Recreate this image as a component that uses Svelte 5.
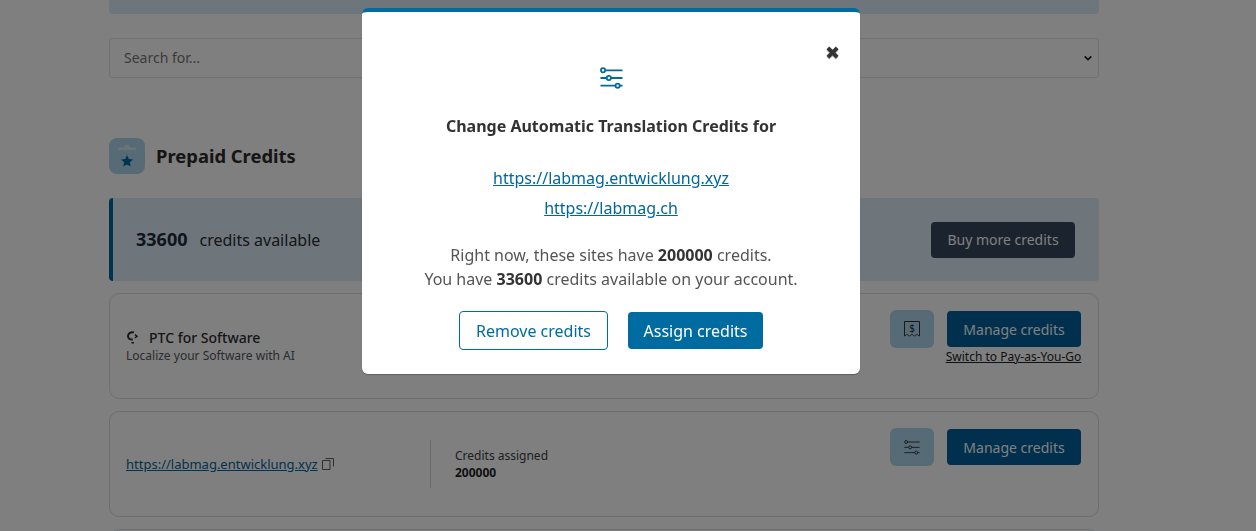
<script lang="ts">
  const sites = ['https://labmag.entwicklung.xyz', 'https://labmag.ch'];
  const siteCredits = 200000;
  const available = 33600;
</script>

{#snippet sliders(cls)}
  <svg class={cls} viewBox="0 0 24 24" fill="none" stroke="currentColor" aria-hidden="true">
    <path d="M5.4 4.5H23.5M.5 12.5h6.4M11.5 12.5h12M.5 20.5h15.6M20.6 20.5h2.9" />
    <circle cx="3.2" cy="4.5" r="2.2" />
    <circle cx="9.2" cy="12.5" r="2.2" />
    <circle cx="18.4" cy="20.5" r="2.2" />
  </svg>
{/snippet}

<div class="page">
  <div class="top-band"></div>

  <div class="filters">
    <input class="search" type="text" placeholder="Search for..." />
    <div class="select">
      <svg viewBox="0 0 12 12" fill="none" stroke="currentColor" stroke-width="2" aria-hidden="true"><path d="M2 4l4 4 4-4" /></svg>
    </div>
  </div>

  <div class="section-title">
    <span class="section-icon">
      <svg viewBox="0 0 36 36" aria-hidden="true">
        <path class="clip" d="M10 9.5h5c.4-2 1.4-3 3-3s2.600 1 3 3h5a1.200 1.200 0 0 1 0 2.500H10a1.200 1.200 0 0 1 0-2.500z" />
        <path class="star" d="M18 17l1.800 3.900 4.200.5-3.100 2.900.8 4.200-3.700-2.100-3.700 2.100.8-4.200-3.100-2.900 4.200-.5z" />
      </svg>
    </span>
    <h2>Prepaid Credits</h2>
  </div>

  <div class="balance">
    <div class="balance-text"><strong>{available}</strong><span>credits available</span></div>
    <button class="btn-dark" type="button">Buy more credits</button>
  </div>

  <div class="card">
    <div class="product">
      <div class="product-name">
        <svg viewBox="0 0 13 13" fill="none" stroke="currentColor" aria-hidden="true">
          <path stroke-width="1.9" d="M8 1.400C4.400.6 1.800 2.800 2 5.400c.2 2.200 2.400 3.600 4.800 3" />
          <path stroke-width="1.500" d="M9 3.600l2 1.700-2 1.700M5.500 11.700h2.500" />
        </svg>
        PTC for Software
      </div>
      <div class="product-sub">Localize your Software with AI</div>
    </div>
    <div class="actions">
      <span class="icon-tile">
        <svg viewBox="0 0 16 16" fill="none" stroke="currentColor" aria-hidden="true">
          <path d="M.5.5h15v14.500c-1.200 0-1.500-1.500-2.500-1.500s-1.500 1.500-2.500 1.500S9 13.500 8 13.500 6.500 15 5.500 15 4 13.500 3 13.500 1.700 15 .5 15z" />
          <text x="8" y="10.500" text-anchor="middle">$</text>
        </svg>
      </span>
      <div class="manage">
        <button class="btn-primary" type="button">Manage credits</button>
        <span class="switch">Switch to Pay-as-You-Go</span>
      </div>
    </div>
  </div>

  <div class="card">
    <div class="site">
      <span class="site-link">{sites[0]}</span>
      <svg viewBox="0 0 12 12" fill="none" stroke="currentColor" stroke-width="0.8" aria-hidden="true">
        <path d="M.5 2.500h7.500v9H.5z" /><path d="M3.500.5h8v8" />
      </svg>
    </div>
    <div class="assigned">
      <span>Credits assigned</span>
      <strong>{siteCredits}</strong>
    </div>
    <div class="actions">
      <span class="icon-tile">{@render sliders('tile-sliders')}</span>
      <div class="manage">
        <button class="btn-primary" type="button">Manage credits</button>
      </div>
    </div>
  </div>

  <div class="card"></div>
</div>

<div class="backdrop">
  <div class="modal">
    <span class="close">✖</span>
    {@render sliders('modal-icon')}
    <h3>Change Automatic Translation Credits for</h3>
    <div class="links">
      {#each sites as site}
        <span>{site}</span>
      {/each}
    </div>
    <p>
      Right now, these sites have <strong>{siteCredits}</strong> credits.<br />
      You have <strong>{available}</strong> credits available on your account.
    </p>
    <div class="modal-actions">
      <button class="btn-outline" type="button">Remove credits</button>
      <button class="btn-assign" type="button">Assign credits</button>
    </div>
  </div>
</div>

<style>
  :global(body) {
    margin: 0;
    background: #fff;
    font-family: "Noto Sans", sans-serif;
    overflow: hidden;
  }

  .page {
    width: 990px;
    height: 531px;
    margin: 0 0 0 109px;
    overflow: hidden;
    color: #2b2d2f;
  }

  .top-band {
    height: 14px;
    border-radius: 0 0 4px 4px;
    background: #dcebf7;
  }

  .filters {
    display: flex;
    margin-top: 24px;
    height: 40px;
    border: 1px solid #e2e2e2;
    border-radius: 3px;
    box-sizing: border-box;
  }

  .search {
    flex: 1;
    border: 0;
    outline: 0;
    padding: 0 14px 2px;
    background: transparent;
    font: 14px "Noto Sans", sans-serif;
  }

  .search::placeholder {
    color: #757575;
  }

  .select {
    display: flex;
    align-items: center;
    padding-right: 5px;
    color: #222;
  }

  .select svg {
    width: 10px;
    height: 10px;
  }

  .section-title {
    display: flex;
    align-items: center;
    gap: 11px;
    margin-top: 60px;
    height: 36px;
  }

  .section-icon {
    display: flex;
    width: 36px;
    height: 36px;
    border-radius: 8px;
    background: #aed6ec;
  }

  .section-icon svg {
    width: 36px;
    height: 36px;
  }

  .clip {
    fill: #d5e6f0;
  }

  .star {
    fill: #006ba1;
  }

  h2 {
    margin: 0;
    padding-bottom: 2px;
    font-size: 18.4px;
    font-weight: 700;
    color: #2b2b2b;
  }

  .balance {
    display: flex;
    align-items: center;
    justify-content: space-between;
    box-sizing: border-box;
    height: 83px;
    margin-top: 24px;
    padding: 0 24px 0 23px;
    border-left: 4px solid #00669b;
    border-radius: 4px;
    background: #dcebf7;
    font-size: 16px;
  }

  .balance-text {
    padding-bottom: 2px;
  }

  .balance strong {
    margin-right: 12px;
    font-size: 18px;
    color: #1e2a38;
  }

  .btn-dark,
  .btn-primary {
    height: 36px;
    border: 0;
    border-radius: 4px;
    color: #fff;
    font: 400 14px "Noto Sans", sans-serif;
  }

  .btn-dark {
    width: 144px;
    background: #34465c;
  }

  .btn-primary {
    width: 134px;
    background: #00609a;
  }

  .card {
    display: flex;
    align-items: flex-start;
    box-sizing: border-box;
    height: 106px;
    margin-top: 12px;
    padding: 16px 17px 16px 16px;
    border: 1px solid #d2dfe6;
    border-radius: 10px;
  }

  .product {
    flex: 1;
    margin-top: 19px;
  }

  .product-name {
    display: flex;
    align-items: center;
    gap: 10px;
    font-size: 14px;
    font-weight: 500;
    line-height: 17px;
  }

  .product-name svg {
    width: 13px;
    height: 13px;
    flex: none;
  }

  .product-sub {
    margin-top: 2px;
    font-size: 12px;
    line-height: 16px;
    color: #50575e;
  }

  .actions {
    display: flex;
    align-items: flex-start;
    gap: 12px;
    margin-left: auto;
  }

  .icon-tile {
    display: flex;
    align-items: center;
    justify-content: center;
    width: 44px;
    height: 38px;
    border-radius: 6px;
    background: #aed6ec;
    color: #2c3338;
  }

  .icon-tile svg {
    width: 16px;
    height: 16px;
  }

  .icon-tile text {
    font-size: 10px;
    fill: currentColor;
    stroke: none;
  }

  .manage {
    display: flex;
    flex-direction: column;
    align-items: flex-end;
    width: 135px;
    margin-top: 1px;
  }

  .switch {
    align-self: center;
    margin-top: 2px;
    font-size: 12px;
    line-height: 15px;
    white-space: nowrap;
    color: #1d2327;
    text-decoration: underline;
  }

  .site {
    display: flex;
    align-items: center;
    gap: 4px;
    width: 304px;
    margin-top: 27px;
    font-size: 13px;
    line-height: 18px;
  }

  .site-link {
    color: #00669b;
    text-decoration: underline;
  }

  .site svg {
    width: 12px;
    height: 12px;
    color: #333;
  }

  .assigned {
    display: flex;
    flex-direction: column;
    height: 48px;
    margin-top: 12px;
    padding: 7px 0 0 24px;
    box-sizing: border-box;
    border-left: 1px solid #c9d8df;
    font-size: 12px;
    line-height: 17px;
    color: #3a3f44;
  }

  .assigned strong {
    color: #222;
  }

  .tile-sliders {
    stroke-width: 1.4;
  }

  .backdrop {
    position: fixed;
    inset: 0;
    background: rgba(0, 0, 0, 0.5);
  }

  .modal {
    position: absolute;
    top: 8px;
    left: 362px;
    display: flex;
    flex-direction: column;
    align-items: center;
    box-sizing: border-box;
    width: 498px;
    height: 366px;
    padding-top: 54px;
    border-top: 4px solid #006ba1;
    border-radius: 6px;
    background: #fff;
    box-shadow: 0 1px 1px rgba(0, 0, 0, 0.25);
    text-align: center;
  }

  .close {
    position: absolute;
    top: 29px;
    right: 20px;
    font-size: 18px;
    line-height: 22px;
    color: #333;
    text-shadow: 0 1px 1px rgba(0, 0, 0, 0.35);
  }

  .modal-icon {
    width: 23px;
    height: 23px;
    color: #006ba1;
    stroke-width: 1.9;
  }

  h3 {
    margin: 26px 0 0;
    font-size: 16px;
    line-height: 22px;
    font-weight: 700;
    color: #333;
  }

  .links {
    display: flex;
    flex-direction: column;
    gap: 8px;
    margin-top: 30px;
    font-size: 16px;
    line-height: 22px;
    color: #00669b;
    text-decoration: underline;
  }

  p {
    margin: 24px 0 0;
    font-size: 16px;
    line-height: 24px;
    color: #555;
  }

  p strong {
    color: #333;
  }

  .modal-actions {
    display: flex;
    align-items: center;
    gap: 20px;
    margin-top: 20px;
  }

  .btn-outline,
  .btn-assign {
    border-radius: 4px;
    font: 400 16px "Noto Sans", sans-serif;
  }

  .btn-outline {
    width: 149px;
    height: 39px;
    border: 1px solid #006ba1;
    background: #fff;
    color: #006ba1;
  }

  .btn-assign {
    width: 135px;
    height: 37px;
    border: 0;
    background: #006ba1;
    color: #fff;
  }
</style>
